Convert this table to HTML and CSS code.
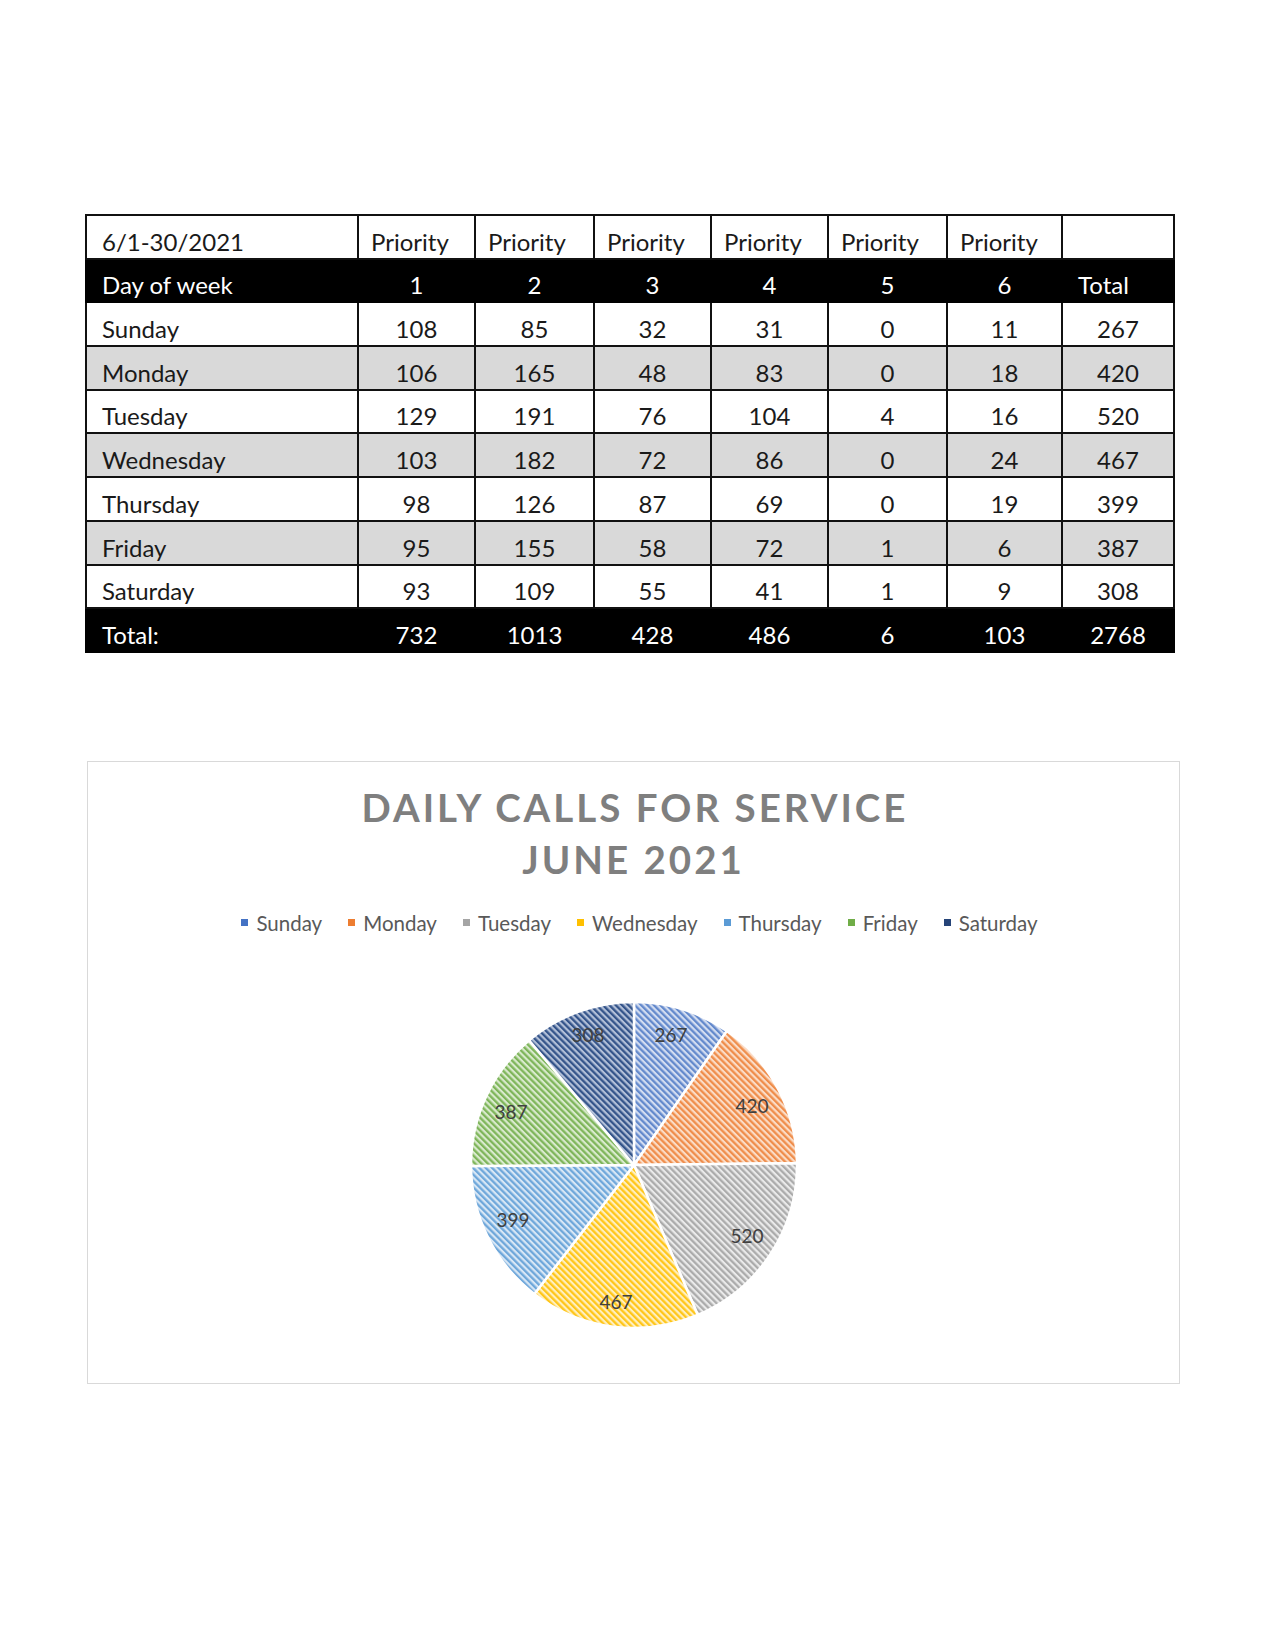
FILE: index.html
```html
<!DOCTYPE html>
<html lang="en">
<head>
<meta charset="utf-8">
<title>Daily Calls for Service - June 2021</title>
<link rel="stylesheet" href="styles.css">
</head>
<body>
<main class="page">
  <table class="calls">
    <colgroup>
      <col class="col-day">
      <col class="col-p1">
      <col class="col-p2">
      <col class="col-p3">
      <col class="col-p4">
      <col class="col-p5">
      <col class="col-p6">
      <col class="col-total">
    </colgroup>
    <tbody>
      <tr class="row-white">
        <td class="lbl">6/1-30/2021</td>
        <td class="head">Priority</td>
        <td class="head">Priority</td>
        <td class="head">Priority</td>
        <td class="head">Priority</td>
        <td class="head">Priority</td>
        <td class="head">Priority</td>
        <td class="head"></td>
      </tr>
      <tr class="row-black">
        <td class="lbl">Day of week</td>
        <td>1</td><td>2</td><td>3</td><td>4</td><td>5</td><td>6</td>
        <td class="head-total">Total</td>
      </tr>
      <tr class="row-white">
        <td class="lbl">Sunday</td>
        <td>108</td><td>85</td><td>32</td><td>31</td><td>0</td><td>11</td><td>267</td>
      </tr>
      <tr class="row-grey">
        <td class="lbl">Monday</td>
        <td>106</td><td>165</td><td>48</td><td>83</td><td>0</td><td>18</td><td>420</td>
      </tr>
      <tr class="row-white">
        <td class="lbl">Tuesday</td>
        <td>129</td><td>191</td><td>76</td><td>104</td><td>4</td><td>16</td><td>520</td>
      </tr>
      <tr class="row-grey">
        <td class="lbl">Wednesday</td>
        <td>103</td><td>182</td><td>72</td><td>86</td><td>0</td><td>24</td><td>467</td>
      </tr>
      <tr class="row-white">
        <td class="lbl">Thursday</td>
        <td>98</td><td>126</td><td>87</td><td>69</td><td>0</td><td>19</td><td>399</td>
      </tr>
      <tr class="row-grey">
        <td class="lbl">Friday</td>
        <td>95</td><td>155</td><td>58</td><td>72</td><td>1</td><td>6</td><td>387</td>
      </tr>
      <tr class="row-white">
        <td class="lbl">Saturday</td>
        <td>93</td><td>109</td><td>55</td><td>41</td><td>1</td><td>9</td><td>308</td>
      </tr>
      <tr class="row-black">
        <td class="lbl">Total:</td>
        <td>732</td><td>1013</td><td>428</td><td>486</td><td>6</td><td>103</td><td>2768</td>
      </tr>
    </tbody>
  </table>

  <section class="chart">
    <h2 class="chart-title">DAILY CALLS FOR SERVICE<br>JUNE 2021</h2>
    <ul class="legend">
      <li class="legend-item"><span class="swatch sw-sun"></span>Sunday</li>
      <li class="legend-item"><span class="swatch sw-mon"></span>Monday</li>
      <li class="legend-item"><span class="swatch sw-tue"></span>Tuesday</li>
      <li class="legend-item"><span class="swatch sw-wed"></span>Wednesday</li>
      <li class="legend-item"><span class="swatch sw-thu"></span>Thursday</li>
      <li class="legend-item"><span class="swatch sw-fri"></span>Friday</li>
      <li class="legend-item"><span class="swatch sw-sat"></span>Saturday</li>
    </ul>
    <svg class="pie" width="340" height="340" viewBox="0 0 340 340" xmlns="http://www.w3.org/2000/svg">
      <defs>
        <pattern id="h-sun" width="4.5" height="4.5" patternUnits="userSpaceOnUse" patternTransform="rotate(-45)">
          <rect width="4.5" height="4.5" fill="#d3ddf1"/><rect width="2.3" height="4.5" fill="#6389cc"/>
        </pattern>
        <pattern id="h-mon" width="4.5" height="4.5" patternUnits="userSpaceOnUse" patternTransform="rotate(-45)">
          <rect width="4.5" height="4.5" fill="#fbdcc6"/><rect width="2.3" height="4.5" fill="#ef8d4b"/>
        </pattern>
        <pattern id="h-tue" width="4.5" height="4.5" patternUnits="userSpaceOnUse" patternTransform="rotate(-45)">
          <rect width="4.5" height="4.5" fill="#eaeaea"/><rect width="2.3" height="4.5" fill="#ababab"/>
        </pattern>
        <pattern id="h-wed" width="4.5" height="4.5" patternUnits="userSpaceOnUse" patternTransform="rotate(-45)">
          <rect width="4.5" height="4.5" fill="#ffefbf"/><rect width="2.3" height="4.5" fill="#ffc61a"/>
        </pattern>
        <pattern id="h-thu" width="4.5" height="4.5" patternUnits="userSpaceOnUse" patternTransform="rotate(-45)">
          <rect width="4.5" height="4.5" fill="#d8e7f5"/><rect width="2.3" height="4.5" fill="#6ea7da"/>
        </pattern>
        <pattern id="h-fri" width="4.5" height="4.5" patternUnits="userSpaceOnUse" patternTransform="rotate(-45)">
          <rect width="4.5" height="4.5" fill="#d9eacd"/><rect width="2.3" height="4.5" fill="#7eb55a"/>
        </pattern>
        <pattern id="h-sat" width="4.5" height="4.5" patternUnits="userSpaceOnUse" patternTransform="rotate(-45)">
          <rect width="4.5" height="4.5" fill="#b3c0d8"/><rect width="2.3" height="4.5" fill="#34548a"/>
        </pattern>
      </defs>
      <g class="slices">
        <path fill="url(#h-sun)" d="M170,170 L170,7 A163,163 0 0 1 262.86,36.03 Z"/>
        <path fill="url(#h-mon)" d="M170,170 L262.86,36.03 A163,163 0 0 1 332.99,168.15 Z"/>
        <path fill="url(#h-tue)" d="M170,170 L332.99,168.15 A163,163 0 0 1 233.74,320.02 Z"/>
        <path fill="url(#h-wed)" d="M170,170 L233.74,320.02 A163,163 0 0 1 70.28,298.94 Z"/>
        <path fill="url(#h-thu)" d="M170,170 L70.28,298.94 A163,163 0 0 1 7,171.11 Z"/>
        <path fill="url(#h-fri)" d="M170,170 L7,171.11 A163,163 0 0 1 65.10,45.24 Z"/>
        <path fill="url(#h-sat)" d="M170,170 L65.10,45.24 A163,163 0 0 1 170,7 Z"/>
      </g>
      <g class="labels">
        <text x="207" y="47">267</text>
        <text x="288" y="118">420</text>
        <text x="283" y="248">520</text>
        <text x="152" y="314">467</text>
        <text x="49" y="232">399</text>
        <text x="47" y="124">387</text>
        <text x="124" y="47">308</text>
      </g>
    </svg>
  </section>
</main>
</body>
</html>
```

FILE: styles.css
```css
html, body {
  margin: 0;
  padding: 0;
  background: #ffffff;
}

.page {
  padding: 214px 0 0 85px;
  font-family: Lato, "Open Sans", "Liberation Sans", sans-serif;
}

/* ---------- table ---------- */
.calls {
  width: 1088px;
  border-collapse: collapse;
  table-layout: fixed;
  font-size: 24px;
  color: #1a1a1a;
}

.col-day   { width: 272px; }
.col-p1    { width: 117px; }
.col-p2    { width: 119px; }
.col-p3    { width: 117px; }
.col-p4    { width: 117px; }
.col-p5    { width: 119px; }
.col-p6    { width: 115px; }
.col-total { width: 112px; }

.calls tr {
  height: 43.7px;
}

.calls td {
  border: 2px solid #111111;
  padding: 0 0 2px 0;
  line-height: 28px;
  vertical-align: bottom;
  text-align: center;
  white-space: nowrap;
}

.calls td.lbl {
  text-align: left;
  padding-left: 15px;
}

.calls td.head {
  text-align: left;
  padding-left: 12px;
}

.calls td.head-total {
  text-align: left;
  padding-left: 15px;
}

.row-white td {
  background: #ffffff;
}

.row-grey td {
  background: #d9d9d9;
}

.row-black td {
  background: #000000;
  color: #ffffff;
  border-color: #000000;
}

/* ---------- chart ---------- */
.chart {
  box-sizing: border-box;
  width: 1093px;
  height: 623px;
  margin: 108px 0 0 2px;
  border: 1px solid #d9d9d9;
  padding-top: 19px;
  background: #ffffff;
}

.chart-title {
  margin: 0;
  font-family: Lato, "Open Sans", "Liberation Sans", sans-serif;
  font-weight: 700;
  font-size: 38.5px;
  line-height: 52px;
  letter-spacing: 3px;
  text-indent: 3px;
  color: #7f7f7f;
  text-align: center;
}

.legend {
  list-style: none;
  margin: 26px 0 0 0;
  padding: 0 0 0 12px;
  display: flex;
  justify-content: center;
  gap: 26px;
  font-size: 20.5px;
  line-height: 24px;
  color: #595959;
}

.legend-item {
  display: flex;
  align-items: center;
  gap: 8px;
}

.swatch {
  width: 7px;
  height: 7px;
  display: inline-block;
}

.sw-sun { background: #4472c4; }
.sw-mon { background: #ed7d31; }
.sw-tue { background: #a5a5a5; }
.sw-wed { background: #ffc000; }
.sw-thu { background: #5b9bd5; }
.sw-fri { background: #70ad47; }
.sw-sat { background: #264478; }

.pie {
  display: block;
  margin: 60px auto 0;
}

.pie .slices path {
  stroke: #ffffff;
  stroke-width: 2.5;
  stroke-linejoin: round;
}

.pie .labels text {
  font-family: Lato, "Open Sans", "Liberation Sans", sans-serif;
  font-size: 19px;
  fill: #404040;
  text-anchor: middle;
}
```
